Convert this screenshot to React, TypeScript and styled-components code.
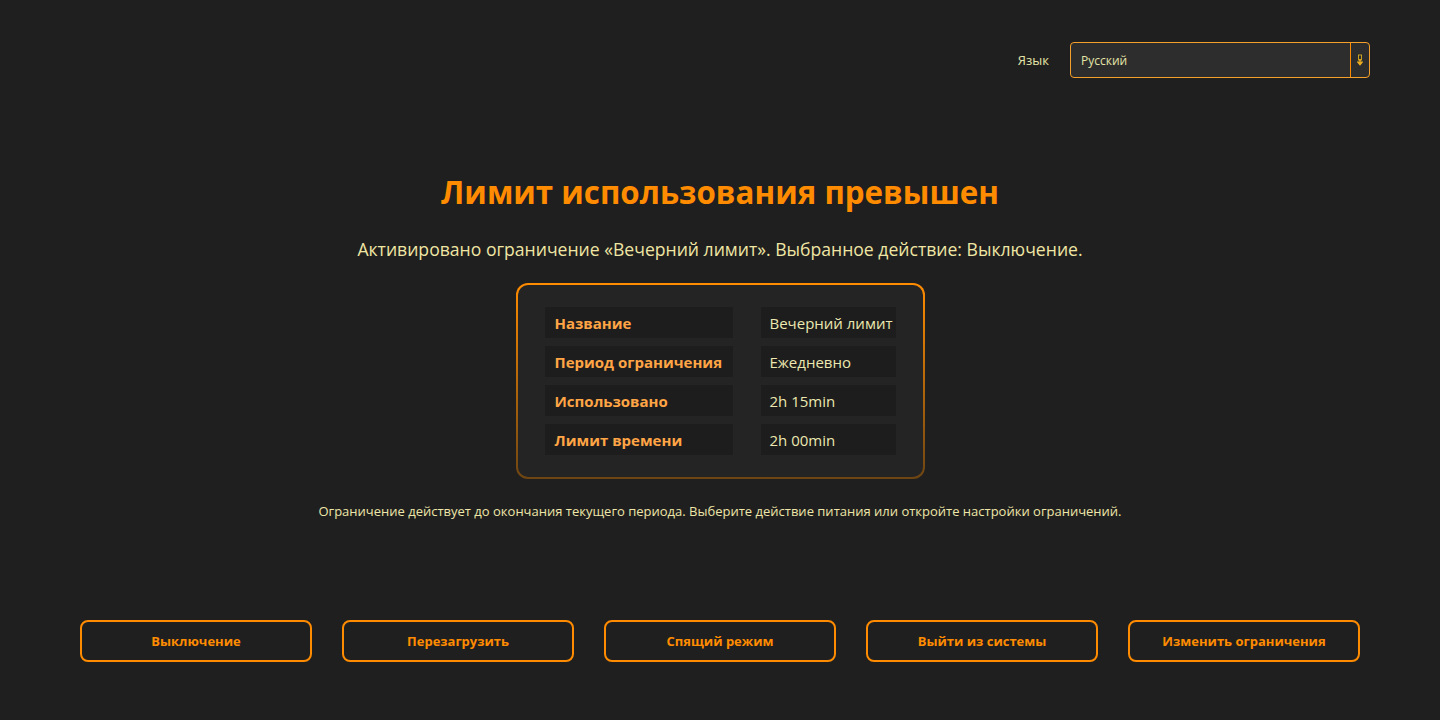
import { Fragment } from "react";
import styled, { createGlobalStyle } from "styled-components";

const GlobalStyle = createGlobalStyle`
    html, body {
        margin: 0;
        padding: 0;
        background: #1f1f1f;
        font-family: "Open Sans", "Noto Sans", sans-serif;
    }
`

const Page = styled.div`
    width: 1440px;
    height: 720px;
    box-sizing: border-box;
    padding: 42px 70px 0 80px;
    display: flex;
    flex-direction: column;
`

const TopBar = styled.div`
    display: flex;
    justify-content: flex-end;
    align-items: center;
    gap: 21px;
`

const LangLabel = styled.label`
    font-size: 13px;
    color: #e4e4a8;
`

const Select = styled.div`
    width: 300px;
    height: 36px;
    box-sizing: border-box;
    border: 1px solid #f5a02a;
    border-radius: 4px;
    background: #2d2d2d;
    display: flex;
    align-items: stretch;
`

const SelectValue = styled.span`
    flex: 1;
    display: flex;
    align-items: center;
    padding-left: 10px;
    font-size: 12px;
    color: #e4e4a8;
`

const SelectArrow = styled.span`
    width: 18px;
    border-left: 1px solid #ff8c00;
    display: flex;
    align-items: center;
    justify-content: center;
`

const Main = styled.main`
    display: flex;
    flex-direction: column;
    align-items: center;
    margin-top: 94px;
    margin-right: 10px;
`

const Title = styled.h1`
    margin: 0;
    font-size: 31.3px;
    font-weight: 700;
    color: #ff8c00;
    line-height: 40px;
`

const Subtitle = styled.p`
    margin: 25px 0 0 0;
    font-size: 17.6px;
    line-height: 24px;
    color: #f0e6a4;
`

const Card = styled.section`
    margin-top: 22px;
    width: 409px;
    box-sizing: border-box;
    padding: 22px 27px;
    border: 2px solid transparent;
    border-radius: 12px;
    background:
        linear-gradient(#242424, #242424) padding-box,
        linear-gradient(180deg, #ff8c00, #6e4512) border-box;
`

const Table = styled.div`
    display: grid;
    grid-template-columns: 188px 135px;
    column-gap: 28px;
    row-gap: 8px;
`

const Cell = styled.div<{ $label?: boolean }>`
    height: 31px;
    display: flex;
    align-items: center;
    padding-left: ${p => p.$label ? "10px" : "9px"};
    background: #1d1d1d;
    font-size: 15px;
    font-weight: ${p => p.$label ? 700 : 400};
    color: ${p => p.$label ? "#ffa545" : "#ece8b0"};
    white-space: nowrap;
`

const Note = styled.p`
    margin: 23px 0 0 0;
    font-size: 13px;
    color: #eee6a8;
`

const Actions = styled.div`
    margin-top: 100px;
    display: grid;
    grid-template-columns: repeat(5, 232px);
    column-gap: 30px;
`

const ActionButton = styled.button`
    height: 42px;
    background: transparent;
    border: 2px solid #ff8c00;
    border-radius: 8px;
    color: #ff8c00;
    font-family: inherit;
    font-size: 13px;
    font-weight: 700;
    cursor: pointer;
`

const rows = [
    ["Название", "Вечерний лимит"],
    ["Период ограничения", "Ежедневно"],
    ["Использовано", "2h 15min"],
    ["Лимит времени", "2h 00min"],
]

const actions = ["Выключение", "Перезагрузить", "Спящий режим", "Выйти из системы", "Изменить ограничения"]

export default function App() {
    return (
        <Page>
            <GlobalStyle/>
            <TopBar>
                <LangLabel>Язык</LangLabel>
                <Select>
                    <SelectValue>Русский</SelectValue>
                    <SelectArrow>
                        <svg width="8" height="12" viewBox="0 0 8 12">
                            <rect x="2.5" y="1" width="3" height="5" fill="none" stroke="#c9a020" strokeWidth="1"/>
                            <path d="M4 5 V10 M1.5 7.5 L4 10.5 L6.5 7.5" fill="none" stroke="#f0b020" strokeWidth="1.5"/>
                        </svg>
                    </SelectArrow>
                </Select>
            </TopBar>
            <Main>
                <Title>Лимит использования превышен</Title>
                <Subtitle>Активировано ограничение «Вечерний лимит». Выбранное действие: Выключение.</Subtitle>
                <Card>
                    <Table>
                        {rows.map(([k, v]) => (
                            <Fragment key={k}>
                                <Cell $label>{k}</Cell>
                                <Cell>{v}</Cell>
                            </Fragment>
                        ))}
                    </Table>
                </Card>
                <Note>Ограничение действует до окончания текущего периода. Выберите действие питания или откройте настройки ограничений.</Note>
            </Main>
            <Actions>
                {actions.map(a => <ActionButton key={a}>{a}</ActionButton>)}
            </Actions>
        </Page>
    );
}
